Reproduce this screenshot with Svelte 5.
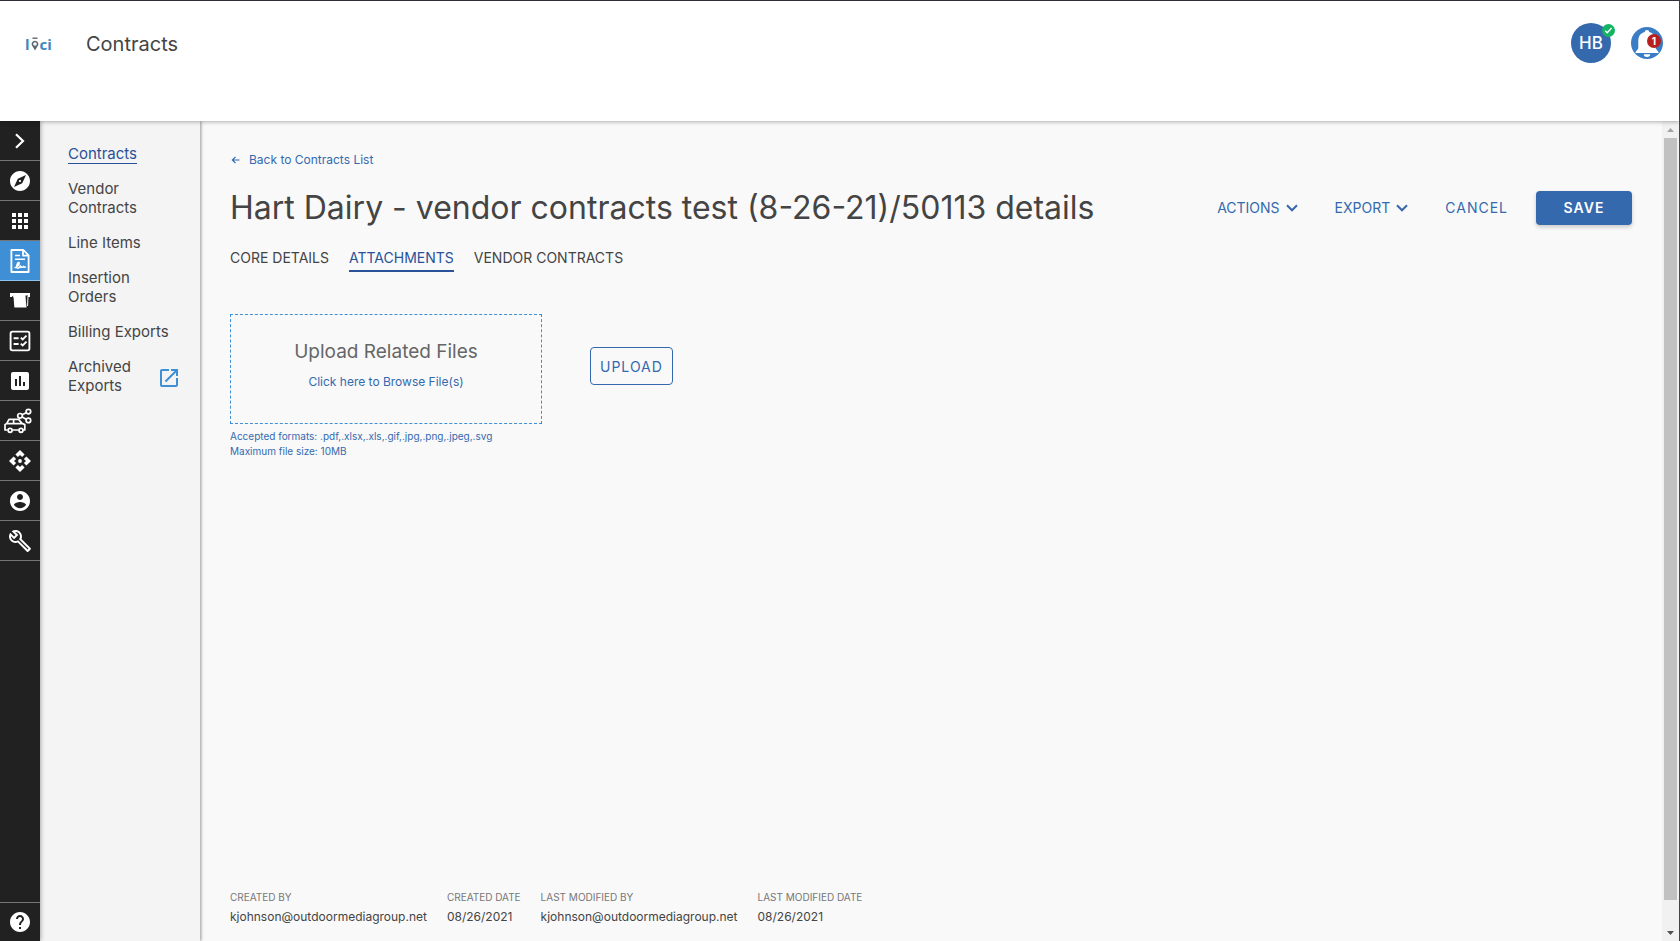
<script>
  const railItems = [
    { name: "Expand menu", icon: "expand" },
    { name: "Explore", icon: "explore" },
    { name: "Dashboard", icon: "apps" },
    { name: "Contracts", icon: "contract" },
    { name: "Inventory", icon: "billboard" },
    { name: "Tasks", icon: "checklist" },
    { name: "Reports", icon: "chart" },
    { name: "Mobility", icon: "mobility" },
    { name: "Integrations", icon: "api" },
    { name: "Account", icon: "account" },
    { name: "Tools", icon: "wrench" },
  ];

  const navItems = [
    { label: "Contracts" },
    { label: "Vendor Contracts" },
    { label: "Line Items" },
    { label: "Insertion Orders" },
    { label: "Billing Exports" },
    { label: "Archived Exports", external: true },
  ];

  const tabs = ["CORE DETAILS", "ATTACHMENTS", "VENDOR CONTRACTS"];

  const audit = [
    { label: "CREATED BY", value: "kjohnson@outdoormediagroup.net" },
    { label: "CREATED DATE", value: "08/26/2021" },
    { label: "LAST MODIFIED BY", value: "kjohnson@outdoormediagroup.net" },
    { label: "LAST MODIFIED DATE", value: "08/26/2021" },
  ];

  let activeRail = $state("contract");
  let activeNav = $state("Contracts");
  let activeTab = $state("ATTACHMENTS");
</script>

{#snippet railIcon(name)}
  <svg class="railIcon" viewBox="0 0 24 24" aria-hidden="true">
    {#if name === "expand"}
      <path d="M8 5.2l7 6.8-7 6.8" fill="none" stroke="currentColor" stroke-width="2.2" />
    {:else if name === "explore"}
      <path d="M12 10.9c-.61 0-1.1.49-1.1 1.1s.49 1.1 1.1 1.1c.61 0 1.1-.49 1.1-1.1s-.49-1.1-1.1-1.1zM12 2C6.48 2 2 6.48 2 12s4.48 10 10 10 10-4.48 10-10S17.52 2 12 2zm2.19 12.19L6 18l3.81-8.19L18 6l-3.81 8.19z" />
    {:else if name === "apps"}
      <path d="M4 8h4V4H4v4zm6 12h4v-4h-4v4zm-6 0h4v-4H4v4zm0-6h4v-4H4v4zm6 0h4v-4h-4v4zm6-10v4h4V4h-4zm-6 4h4V4h-4v4zm6 6h4v-4h-4v4zm0 6h4v-4h-4v4z" />
    {:else if name === "contract"}
      <g fill="none" stroke="currentColor" stroke-width="1.8" stroke-linejoin="round">
        <path d="M3.4 1h12l5.2 5.4V23H3.4z" />
        <path d="M15 1.2v5.4h5.4" />
        <path d="M7 6.6h5M7 10.2h10" stroke-width="1.5" />
        <path d="M6.6 18.8c2.2-.6 5.2-3.4 4.6-5-.9-1.2-2.7 1.2-2.5 4.2.3 2 2 1.6 3.6-1.2-.2 1.6.4 2.2 1.4.8.4 1 1.2 1 1.9-.2.4 1 1.2 1 2.2.2" stroke-width="1.5" />
      </g>
    {:else if name === "billboard"}
      <path d="M2 4h20v4h-2V6.6H4V8H2z" />
      <path d="M5 5h12.4c.2 4 .6 8.6 1.2 13.4H6.4C5.8 14 6 9 5 5z" />
      <path d="M20 7l-.4 10M3 4.5l3 4" fill="none" stroke="currentColor" stroke-width="1" />
    {:else if name === "checklist"}
      <g fill="none" stroke="currentColor" stroke-width="1.9">
        <rect x="2.6" y="2.6" width="18.8" height="18.8" rx="1.8" />
        <path d="M5.6 9.2h5M5.6 15h5" />
        <path d="M12.8 8.6l1.9 1.9 3.8-3.8M12.8 14.6l1.9 1.9 3.8-3.8" />
      </g>
    {:else if name === "chart"}
      <path d="M19 3H5c-1.1 0-2 .9-2 2v14c0 1.1.9 2 2 2h14c1.1 0 2-.9 2-2V5c0-1.1-.9-2-2-2zM9 17H7v-7h2v7zm4 0h-2V7h2v10zm4 0h-2v-4h2v4z" />
    {:else if name === "api"}
      <circle cx="12" cy="12" r="1.9" />
      <path d="M12 6l2.12 2.12 2.5-2.5L12 1 7.38 5.62l2.5 2.5L12 6zm-6 6l2.12-2.12-2.5-2.5L1 12l4.62 4.62 2.5-2.5L6 12zm12 0l-2.12 2.12 2.5 2.5L23 12l-4.62-4.62-2.5 2.5L18 12zm-6 6l-2.12-2.12-2.5 2.5L12 23l4.62-4.62-2.5-2.5L12 18z" />
    {:else if name === "account"}
      <path d="M12 2C6.48 2 2 6.48 2 12s4.48 10 10 10 10-4.48 10-10S17.52 2 12 2zm0 3c1.66 0 3 1.34 3 3s-1.34 3-3 3-3-1.34-3-3 1.34-3 3-3zm0 14.2c-2.5 0-4.71-1.28-6-3.22.03-1.99 4-3.08 6-3.08 1.99 0 5.97 1.09 6 3.08-1.29 1.94-3.5 3.22-6 3.22z" />
    {:else if name === "wrench"}
      <path d="M22.61 18.99l-9.08-9.08c.93-2.34.45-5.1-1.44-7C9.79.61 6.21.4 3.66 2.26L7.5 6.11 6.08 7.52 2.25 3.69C.39 6.23.6 9.82 2.9 12.11c1.86 1.86 4.57 2.35 6.89 1.48l9.11 9.11c.39.39 1.02.39 1.41 0l2.3-2.3c.4-.38.4-1.01 0-1.41zm-3 1.6l-9.46-9.46c-.61.45-1.29.72-2 .82-1.36.2-2.79-.21-3.83-1.25C3.37 9.76 2.93 8.5 3 7.26l3.09 3.09 4.24-4.24-3.09-3.09c1.24-.07 2.49.37 3.44 1.31 1.08 1.08 1.49 2.57 1.24 3.96-.12.71-.42 1.37-.88 1.96l9.45 9.45-.88.89z" />
    {:else if name === "help"}
      <path d="M12 2C6.48 2 2 6.48 2 12s4.48 10 10 10 10-4.48 10-10S17.52 2 12 2zm1 17h-2v-2h2v2zm2.07-7.75l-.9.92C13.45 12.9 13 13.5 13 15h-2v-.5c0-1.1.45-2.1 1.17-2.83l1.24-1.26c.37-.36.59-.86.59-1.41 0-1.1-.9-2-2-2s-2 .9-2 2H8c0-2.21 1.79-4 4-4s4 1.79 4 4c0 .88-.36 1.68-.93 2.25z" />
    {/if}
  </svg>
{/snippet}

{#snippet chevron()}
  <svg width="12" height="8" viewBox="0 0 12 8" aria-hidden="true">
    <path d="M1 1.3l5 5 5-5" fill="none" stroke="currentColor" stroke-width="2" />
  </svg>
{/snippet}

<div class="app">
  <header>
    <a class="logo" href="#home" aria-label="loci">
      <span>l</span>
      <svg width="8" height="14" viewBox="0 0 8 14" aria-hidden="true">
        <path d="M1.5 1.2h5" stroke="#5b6770" stroke-width="1.4" />
        <path d="M4 13.4L1.2 8.8a3.3 3.3 0 1 1 5.6 0z" fill="#5b6770" />
        <circle cx="4" cy="7" r="1.8" fill="#fff" />
      </svg>
      <span>ci</span>
    </a>
    <h2>Contracts</h2>
    <div class="userArea">
      <button class="avatar" aria-label="User menu">
        HB
        <svg class="status" viewBox="0 0 13 13" aria-hidden="true">
          <circle cx="6.5" cy="6.5" r="6.5" fill="#16b364" />
          <path d="M3.2 6.8l2 2 4.4-4.8" fill="none" stroke="#fff" stroke-width="1.3" />
        </svg>
      </button>
      <button class="bell" aria-label="Notifications">
        <svg viewBox="0 0 32 32" aria-hidden="true">
          <circle cx="16" cy="16" r="16" fill="#3b7dc4" />
          <path d="M16 3c1.3 0 2.2.9 2.2 2.1 4.2 1 6.5 4.3 6.5 8.9v7.5l2.8 3.5v.9h-23V25l2.8-3.5V14c0-4.6 2.3-7.9 6.5-8.9C13.8 3.9 14.7 3 16 3z" fill="#fff" />
          <path d="M12.8 27.2h6.4a3.2 2.8 0 0 1-6.4 0z" fill="#fff" />
        </svg>
        <span class="count">1</span>
      </button>
    </div>
  </header>

  <div class="body">
    <nav class="rail" aria-label="Main">
      {#each railItems as item}
        <button
          class:active={activeRail === item.icon}
          aria-label={item.name}
          onclick={() => (activeRail = item.icon)}
        >
          {#if item.icon === "mobility"}
            <svg class="wideIcon" viewBox="0 0 32 26" aria-hidden="true">
              <g fill="none" stroke="currentColor" stroke-width="1.7" stroke-linejoin="round">
                <path d="M3.6 22H1v-5.4l1.8-1.2L5 11.4h9.6l3.4 4 2.8 1.2V22h-1.6M8.6 22h6M2.8 15.6H18M9.6 11.4v4" />
                <circle cx="6.1" cy="22.3" r="2" />
                <circle cx="17" cy="22.3" r="2" />
                <circle cx="16" cy="7.8" r="2.3" />
                <circle cx="24.4" cy="3.6" r="2.3" />
                <circle cx="24.4" cy="12.4" r="2.3" />
                <path d="M18.2 6.8l4-2M18.2 8.9l4 2.3" />
              </g>
            </svg>
          {:else}
            {@render railIcon(item.icon)}
          {/if}
        </button>
      {/each}
      <button class="help" aria-label="Help">{@render railIcon("help")}</button>
    </nav>

    <nav class="subnav" aria-label="Contracts">
      {#each navItems as item}
        <a
          href="#{item.label}"
          class:active={activeNav === item.label}
          onclick={() => (activeNav = item.label)}
        >
          <span>{item.label}</span>
          {#if item.external}
            <svg width="24" height="24" viewBox="0 0 24 24" aria-hidden="true">
              <path d="M19 19H5V5h7V3H5c-1.11 0-2 .9-2 2v14c0 1.1.89 2 2 2h14c1.1 0 2-.9 2-2v-7h-2v7zM14 3v2h3.59l-9.83 9.83 1.41 1.41L19 6.41V10h2V3h-7z" />
            </svg>
          {/if}
        </a>
      {/each}
    </nav>

    <main>
      <a class="back" href="#contracts">
        <svg width="12" height="10" viewBox="0 0 12 10" aria-hidden="true">
          <path d="M9.5 5H2.5M5.5 1.9L2.4 5l3.1 3.1" fill="none" stroke="currentColor" stroke-width="1.2" />
        </svg>
        Back to Contracts List
      </a>

      <div class="titleRow">
        <h1>Hart Dairy - vendor contracts test (8-26-21)/50113 details</h1>
        <div class="actions">
          <button class="menu">ACTIONS {@render chevron()}</button>
          <button class="menu">EXPORT {@render chevron()}</button>
          <button class="cancel">CANCEL</button>
          <button class="save">SAVE</button>
        </div>
      </div>

      <div class="tabs" role="tablist">
        {#each tabs as tab}
          <button
            role="tab"
            aria-selected={activeTab === tab}
            class:active={activeTab === tab}
            onclick={() => (activeTab = tab)}
          >{tab}</button>
        {/each}
      </div>

      <div class="uploadRow">
        <button class="dropzone">
          <span class="dropTitle">Upload Related Files</span>
          <span class="dropHint">Click here to Browse File(s)</span>
        </button>
        <button class="upload">UPLOAD</button>
      </div>
      <p class="formats">
        Accepted formats: .pdf,.xlsx,.xls,.gif,.jpg,.png,.jpeg,.svg<br />
        Maximum file size: 10MB
      </p>

      <dl class="audit">
        {#each audit as { label, value }}
          <div>
            <dt>{label}</dt>
            <dd>{value}</dd>
          </div>
        {/each}
      </dl>
    </main>

    <div class="scrollbar" aria-hidden="true">
      <svg viewBox="0 0 17 17"><path d="M5 11h7L8.5 7z" fill="#a3a3a3" /></svg>
      <div class="track"><div class="thumb"></div></div>
      <svg viewBox="0 0 17 17"><path d="M5 7h7l-3.5 4z" fill="#505050" /></svg>
    </div>
  </div>
</div>

<style>
  :global(body) {
    margin: 0;
  }

  .app {
    display: flex;
    flex-direction: column;
    min-height: 100vh;
    box-sizing: border-box;
    border-top: 1px solid #32323e;
    border-right: 1px solid #45454c;
    background: #f9f9f9;
    color: #444;
    font-family: Inter, "Liberation Sans", sans-serif;
  }

  button {
    padding: 0;
    border: none;
    background: none;
    color: inherit;
    font: inherit;
    cursor: pointer;
  }

  a {
    color: inherit;
    text-decoration: none;
  }

  h1,
  h2 {
    margin: 0;
    font-weight: 400;
  }

  header {
    position: relative;
    z-index: 3;
    display: flex;
    align-items: flex-start;
    height: 120px;
    padding: 0 16px 0 25px;
    box-sizing: border-box;
    background: #fff;
    box-shadow: 0 1px 4px rgba(0, 0, 0, 0.3);
  }

  .logo {
    display: flex;
    align-items: center;
    gap: 1px;
    width: 61px;
    height: 86px;
    color: #3f87c2;
    font-family: "Open Sans", sans-serif;
    font-size: 15px;
    font-weight: 700;
  }

  h2 {
    font-size: 20px;
    line-height: 86px;
  }

  .userArea {
    display: flex;
    align-items: center;
    gap: 20px;
    height: 84px;
    margin-left: auto;
  }

  .avatar {
    position: relative;
    width: 40px;
    height: 40px;
    border-radius: 50%;
    background: #3469ae;
    color: #fff;
    font-size: 17px;
    font-weight: 500;
  }

  .status {
    position: absolute;
    top: 1px;
    right: -4px;
    width: 13px;
    height: 13px;
  }

  .bell {
    position: relative;
    width: 32px;
    height: 32px;
  }

  .bell svg {
    display: block;
  }

  .count {
    position: absolute;
    top: 7px;
    right: 2px;
    width: 14px;
    border-radius: 7px;
    background: #b8201f;
    color: #fff;
    font-size: 10px;
    font-weight: 700;
    line-height: 14px;
  }

  .body {
    display: flex;
    flex: 1;
  }

  .rail {
    position: relative;
    z-index: 2;
    display: flex;
    flex-direction: column;
    width: 40px;
    background: #212121;
    color: #fff;
    box-shadow: 1px 0 4px rgba(0, 0, 0, 0.3);
  }

  .rail button {
    display: flex;
    align-items: center;
    justify-content: center;
    height: 40px;
    box-sizing: border-box;
    border-bottom: 1px solid #757575;
  }

  .rail button.active {
    background: #3f8fd6;
    border-bottom-color: #8ec3f0;
  }

  .rail .help {
    height: 39px;
    margin-top: auto;
    border-top: 1px solid #757575;
    border-bottom: none;
  }

  .railIcon {
    width: 24px;
    height: 24px;
    fill: currentColor;
  }

  .wideIcon {
    width: 32px;
    height: 26px;
  }

  .subnav {
    position: relative;
    z-index: 1;
    display: flex;
    flex-direction: column;
    align-items: flex-start;
    gap: 16px;
    width: 160px;
    padding: 23px 19px 24px 28px;
    box-sizing: border-box;
    background: #f4f4f4;
    box-shadow: 1px 0 3px rgba(0, 0, 0, 0.4);
    font-size: 15px;
    line-height: 19px;
  }

  .subnav a {
    display: flex;
    align-items: center;
    justify-content: space-between;
    align-self: stretch;
  }

  .subnav a.active {
    align-self: flex-start;
    margin-bottom: -1px;
    border-bottom: 1px solid #2a5298;
    color: #2a5298;
  }

  .subnav svg {
    flex: none;
    margin-top: 4px;
    fill: #3f8fd6;
  }

  main {
    display: flex;
    flex: 1;
    flex-direction: column;
    padding: 31px 30px 14px;
  }

  .back {
    display: flex;
    align-items: center;
    align-self: flex-start;
    gap: 7px;
    color: #3469ae;
    font-size: 12px;
    line-height: 16px;
  }

  .titleRow {
    display: flex;
    align-items: center;
    justify-content: space-between;
    margin-top: 18px;
  }

  h1 {
    padding-top: 1px;
    font-size: 32px;
    line-height: 42px;
  }

  .actions {
    display: flex;
    align-items: center;
    color: #3469ae;
    font-size: 14px;
  }

  .menu {
    display: flex;
    align-items: center;
    gap: 6px;
    margin-right: 37px;
  }

  .cancel {
    margin-right: 28px;
    letter-spacing: 1px;
  }

  .save {
    width: 96px;
    height: 34px;
    border-radius: 4px;
    background: #3469ae;
    box-shadow: 0 2px 4px rgba(0, 0, 0, 0.2);
    color: #fff;
    font-weight: 600;
    letter-spacing: 1px;
  }

  .tabs {
    display: flex;
    gap: 20px;
    margin-top: 18px;
    font-size: 14px;
    line-height: 22px;
  }

  .tabs button {
    padding-bottom: 1px;
    border-bottom: 2px solid transparent;
  }

  .tabs button.active {
    border-bottom-color: #2a5298;
    color: #2a5298;
  }

  .uploadRow {
    display: flex;
    align-items: flex-start;
    gap: 48px;
    margin-top: 42px;
  }

  .dropzone {
    display: flex;
    flex-direction: column;
    align-items: center;
    gap: 8px;
    width: 312px;
    height: 110px;
    padding-top: 25px;
    box-sizing: border-box;
    border: 1px dashed #3f8fd6;
  }

  .dropTitle {
    color: #666;
    font-size: 19px;
    line-height: 24px;
  }

  .dropHint {
    color: #3469ae;
    font-size: 12px;
    line-height: 20px;
  }

  .upload {
    height: 38px;
    margin-top: 33px;
    padding: 0 9px;
    border: 1px solid #3469ae;
    border-radius: 4px;
    color: #3469ae;
    font-size: 14px;
    letter-spacing: 1px;
  }

  .formats {
    margin: 5px 0 24px;
    color: #3469ae;
    font-size: 10px;
    line-height: 15px;
  }

  .audit {
    display: flex;
    gap: 20px;
    margin: auto 0 0;
  }

  .audit dt {
    color: #777;
    font-size: 10px;
    line-height: 20px;
  }

  .audit dd {
    margin: 0;
    font-size: 12px;
    line-height: 20px;
  }

  .scrollbar {
    display: flex;
    flex-direction: column;
    width: 17px;
    background: #f1f1f1;
  }

  .scrollbar svg {
    width: 17px;
    height: 17px;
  }

  .track {
    display: flex;
    flex: 1;
    padding: 0 2px;
  }

  .thumb {
    flex: 1;
    height: 97%;
    background: #c1c1c1;
  }
</style>
